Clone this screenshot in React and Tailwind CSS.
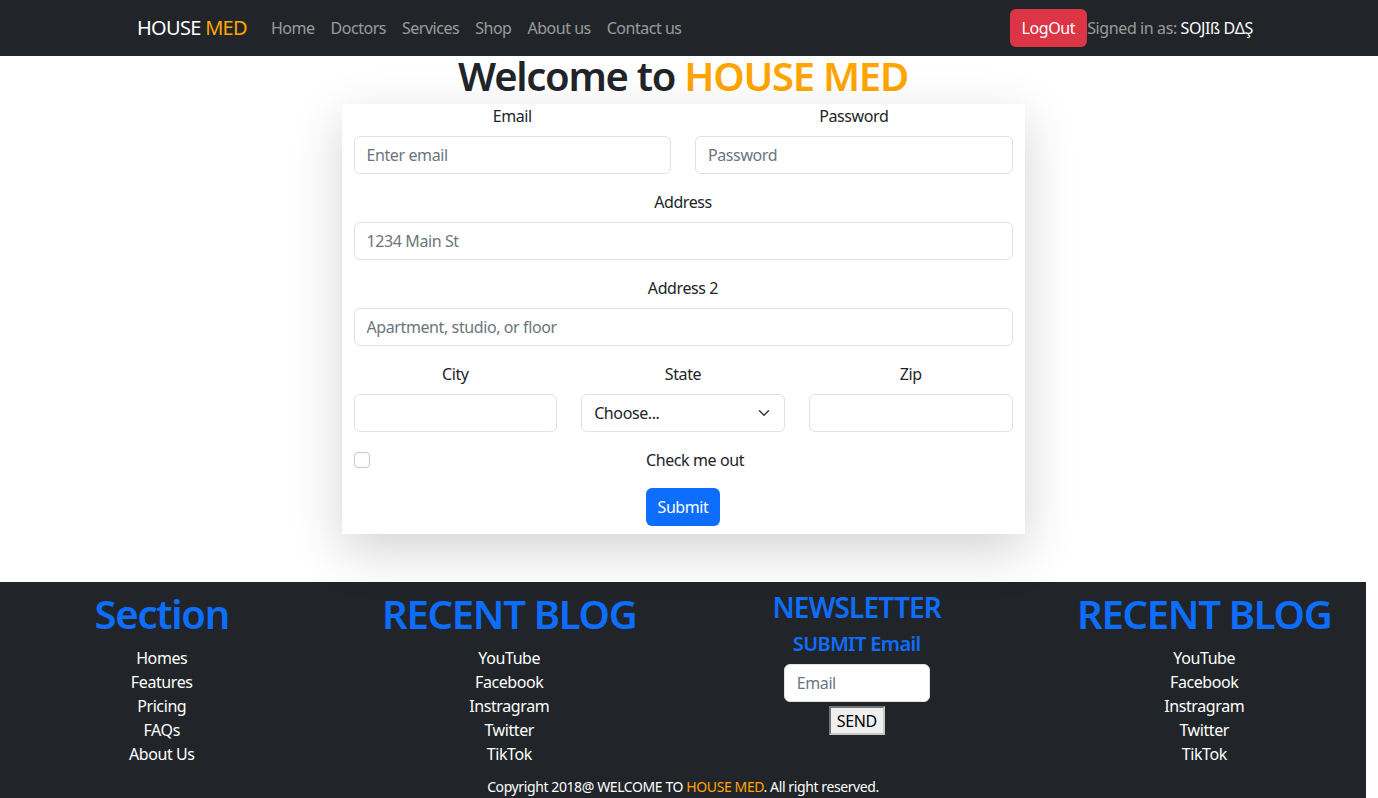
const navLinks = ["Home", "Doctors", "Services", "Shop", "About us", "Contact us"];
const sectionLinks = ["Homes", "Features", "Pricing", "FAQs", "About Us"];
const blogLinks = ["YouTube", "Facebook", "Instragram", "Twitter", "TikTok"];

function Field({ label, placeholder, className = "" }) {
  return (
    <div className={className}>
      <label className="block text-center leading-6 mb-2">{label}</label>
      <input
        placeholder={placeholder}
        className="block w-full h-[38px] rounded-md border border-[#dee2e6] bg-white px-3 text-[16px] tracking-[-0.025em] text-[#212529] placeholder:text-[#6c757d] outline-none"
      />
    </div>
  );
}

function LinkList({ items }) {
  return (
    <ul className="flex flex-col items-center">
      {items.map((i) => (
        <li key={i} className="leading-6 text-white">
          <a>{i}</a>
        </li>
      ))}
    </ul>
  );
}

export default function App() {
  return (
    <div className="font-['Noto_Sans',sans-serif] text-[16px] tracking-[-0.025em] text-[#212529] bg-white min-h-screen">
      <nav className="h-14 bg-[#212529] flex items-center pl-[137px] pr-[125px]">
        <a className="text-[20px] leading-[30px] text-white mr-4 tracking-[-0.035em]">
          HOUSE <span className="text-[#ffa500]">MED</span>
        </a>
        <div className="flex">
          {navLinks.map((l) => (
            <a key={l} className="px-2 leading-6 tracking-[-0.03em] text-[rgba(255,255,255,0.55)]">
              {l}
            </a>
          ))}
        </div>
        <div className="ml-auto flex items-center">
          <button className="h-[38px] px-3 rounded-md bg-[#dc3545] text-white leading-6 tracking-[-0.025em]">LogOut</button>
          <span className="leading-6 text-[rgba(255,255,255,0.55)]">
            Signed in as: <span className="text-white">SOJIß DΔŞ</span>
          </span>
        </div>
      </nav>

      <main className="w-[1366px] flex flex-col items-center">
        <h1 className="text-[40px] leading-[40px] mb-2 font-semibold tracking-[-0.032em] text-[#212529]">
          Welcome to <span className="text-[#ffa500]">HOUSE MED</span>
        </h1>
        <form className="w-[683px] bg-white px-3 pb-2 mb-12 shadow-[0_1rem_3rem_rgba(0,0,0,0.175)]">
          <div className="grid grid-cols-2 gap-x-6 mb-4">
            <Field label="Email" placeholder="Enter email" />
            <Field label="Password" placeholder="Password" />
          </div>
          <Field label="Address" placeholder="1234 Main St" className="mb-4" />
          <Field label="Address 2" placeholder="Apartment, studio, or floor" className="mb-4" />
          <div className="grid grid-cols-3 gap-x-6 mb-4">
            <Field label="City" placeholder="" />
            <div>
              <label className="block text-center leading-6 mb-2">State</label>
              <div className="relative h-[38px] rounded-md border border-[#dee2e6] bg-white flex items-center pl-3 pr-9">
                <span>Choose...</span>
                <svg className="absolute right-3 top-1/2 -translate-y-1/2" width="16" height="12" viewBox="0 0 16 16">
                  <path fill="none" stroke="#343a40" strokeLinecap="round" strokeLinejoin="round" strokeWidth="2" d="m2 5 6 6 6-6" />
                </svg>
              </div>
            </div>
            <Field label="Zip" placeholder="" />
          </div>
          <div className="flex items-center mb-4">
            <span className="w-4 h-4 rounded border border-[#c4c8cc] bg-white shrink-0" />
            <span className="flex-1 text-center leading-6 ml-2">Check me out</span>
          </div>
          <div className="flex justify-center">
            <button type="button" className="h-[38px] px-3 rounded-md bg-[#0d6efd] text-white leading-6 tracking-[-0.025em]">
              Submit
            </button>
          </div>
        </form>
      </main>

      <footer className="w-[1366px] bg-[#212529] pt-2 pb-6">
        <div className="-mx-3 grid grid-cols-4 text-center">
          <div className="flex flex-col items-center">
            <h2 className="text-[40px] leading-[48px] font-semibold tracking-[-0.032em] text-[#0d6efd] mb-2">Section</h2>
            <LinkList items={sectionLinks} />
          </div>
          <div className="flex flex-col items-center">
            <h2 className="text-[40px] leading-[48px] font-semibold tracking-[-0.032em] text-[#0d6efd] mb-2">RECENT BLOG</h2>
            <LinkList items={blogLinks} />
          </div>
          <div className="flex flex-col items-center">
            <h3 className="text-[28px] leading-[34px] font-semibold tracking-[-0.03em] text-[#0d6efd] mb-2">NEWSLETTER</h3>
            <h5 className="text-[20px] leading-6 font-semibold tracking-[-0.03em] text-[#0d6efd] mb-2">SUBMIT Email</h5>
            <input
              placeholder="Email"
              className="block w-[146px] h-[38px] rounded-md border border-[#dee2e6] bg-white px-3 text-[16px] tracking-[-0.025em] placeholder:text-[#6c757d] outline-none"
            />
            <button type="button" className="mt-1 h-[29px] px-[6px] bg-[#efefef] text-black leading-5 tracking-[-0.025em] border-2 border-t-[#767676] border-l-[#767676] border-r-[#c8c8c8] border-b-[#c8c8c8]">
              SEND
            </button>
          </div>
          <div className="flex flex-col items-center">
            <h2 className="text-[40px] leading-[48px] font-semibold tracking-[-0.032em] text-[#0d6efd] mb-2">RECENT BLOG</h2>
            <LinkList items={blogLinks} />
          </div>
        </div>
        <p className="text-center text-[14px] leading-[21px] text-white mt-[10px]">
          Copyright 2018@ WELCOME TO <span className="text-[#ffa500]">HOUSE MED</span>. All right reserved.
        </p>
      </footer>
    </div>
  );
}
